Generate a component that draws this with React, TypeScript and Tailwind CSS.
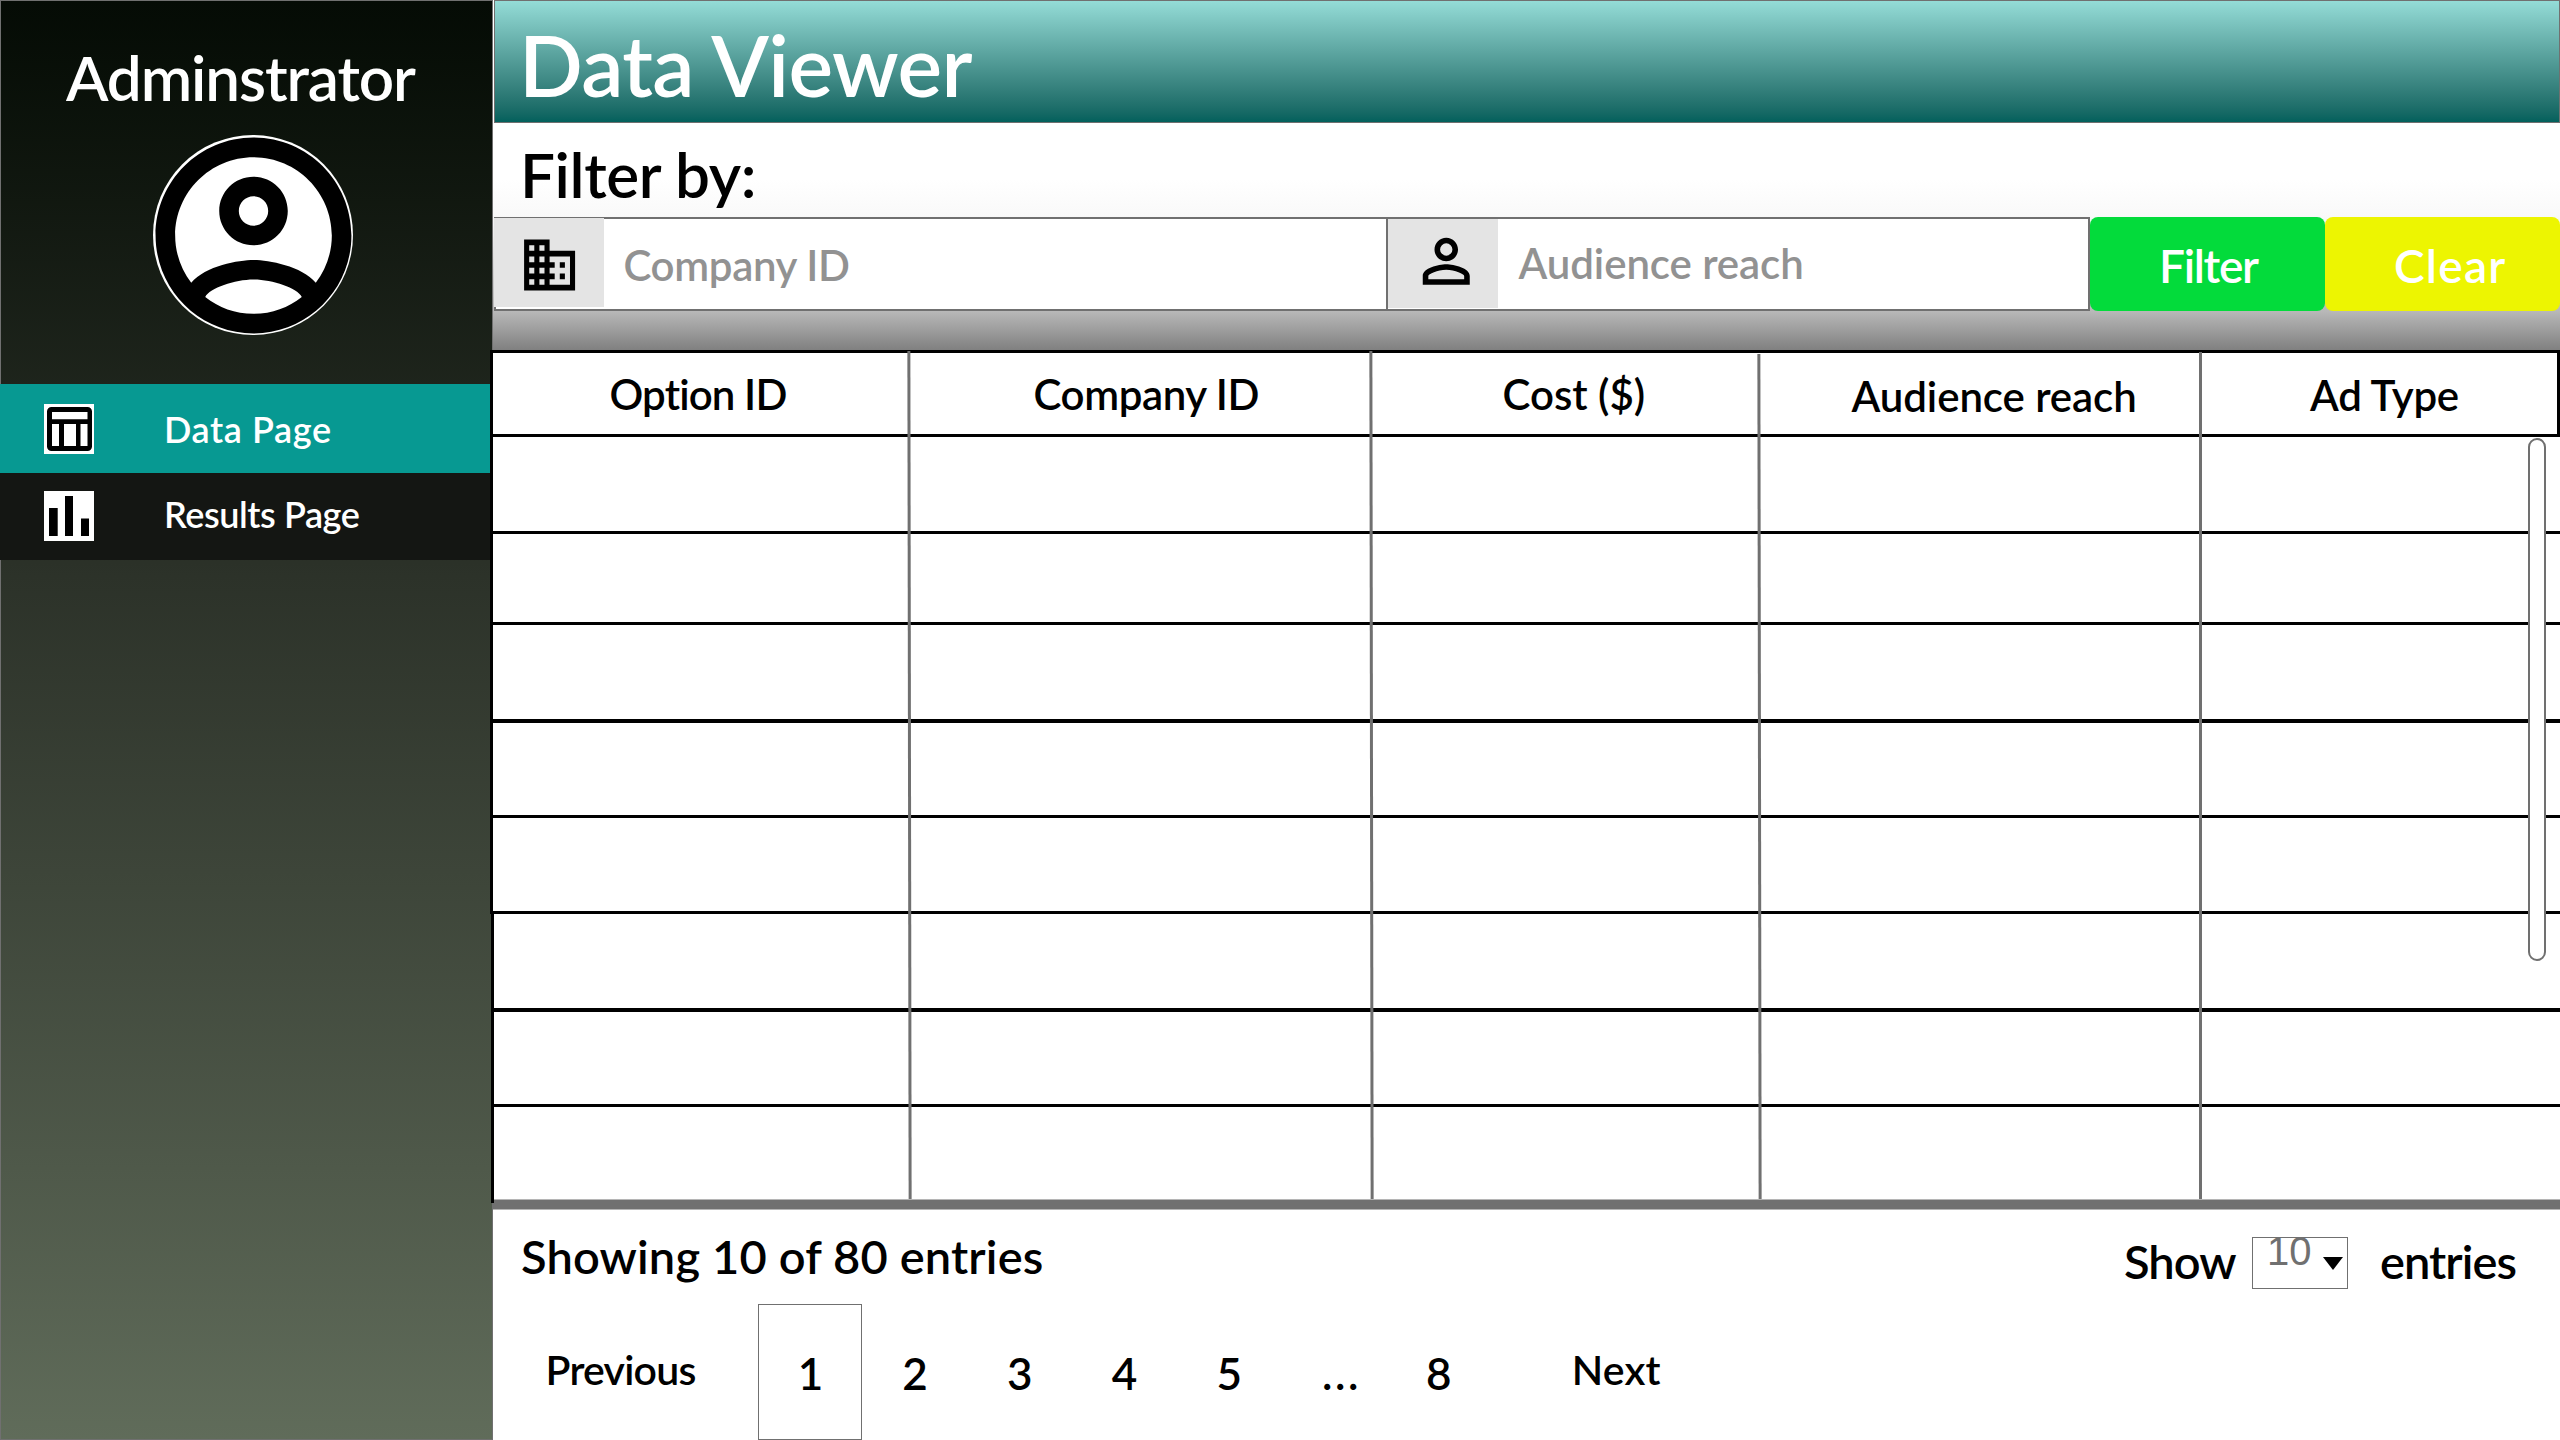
import React from "react";

const columns = [
  { label: "Option ID", cell: "pl-[116.5px] pt-[20px] tracking-[-0.85px]" },
  { label: "Company ID", cell: "pl-[123.5px] pt-[20px] tracking-[-0.4px]" },
  { label: "Cost ($)", cell: "pl-[130.5px] pt-[20px] tracking-[0px]" },
  { label: "Audience reach", cell: "pl-[91.5px] pt-[22px] tracking-[-0.08px]" },
  { label: "Ad Type", cell: "pl-[108px] pt-[21px] tracking-[-0.24px]" },
];

const rows = [
  "h-[97px] border-b-[3px]",
  "h-[91px] border-b-[3px]",
  "h-[98px] border-b-[4px]",
  "h-[95px] border-b-[3px]",
  "h-[96px] border-b-[3px]",
  "ml-px h-[98px] border-b-[4px]",
  "ml-px h-[95px] border-b-[3px]",
  "ml-px h-[92px]",
];

const rules = [
  "left-[418px] top-[1px] h-[848px] rotate-[-0.085deg]",
  "left-[880px] top-[1px] h-[848px] rotate-[-0.085deg]",
  "left-[1268px] top-[4px] h-[845px] rotate-[-0.085deg]",
  "left-[1709px] top-[2px] h-[847px]",
];

const pages = ["2", "3", "4", "5", "...", "8"];

function AvatarIcon() {
  return (
    <svg viewBox="0 0 24 24" className="size-[235px] shrink-0">
      <path
        fillRule="evenodd"
        d="M12 2C6.48 2 2 6.48 2 12s4.48 10 10 10 10-4.48 10-10S17.52 2 12 2zM7.07 18.28C7.5 17.38 10.12 16.5 12 16.5s4.51.88 4.93 1.78C15.57 19.36 13.86 20 12 20s-3.57-.64-4.93-1.72zm11.29-1.45C16.93 15.09 13.46 14.5 12 14.5s-4.93.59-6.36 2.33C4.62 15.49 4 13.82 4 12c0-4.41 3.59-8 8-8s8 3.59 8 8c0 1.82-.62 3.49-1.64 4.83zM12 6c-1.94 0-3.5 1.56-3.5 3.5S10.06 13 12 13s3.5-1.56 3.5-3.5S13.94 6 12 6zm0 5c-.83 0-1.5-.67-1.5-1.5S11.17 8 12 8s1.5.67 1.5 1.5S12.83 11 12 11z"
      />
    </svg>
  );
}

function TableIcon() {
  return (
    <svg viewBox="0 0 50 50" className="size-[50px] shrink-0 bg-white">
      <path
        fillRule="evenodd"
        d="M7.5 3h36a4.5 4.5 0 0 1 4.5 4.5v35a4.5 4.5 0 0 1-4.5 4.5h-36A4.5 4.5 0 0 1 3 42.5v-35A4.5 4.5 0 0 1 7.5 3zM8 8v7.3h35.5V8zM8 20v22h7V20zM20 20v22h12V20zM36.5 20v22h7V20z"
      />
    </svg>
  );
}

function BarsIcon() {
  return (
    <svg viewBox="0 0 50 50" className="size-[50px] shrink-0 bg-white">
      <path d="M5 17h8.7v28H5zM21 5h8v40h-8zM37 27.5h8V45h-8z" />
    </svg>
  );
}

function BuildingIcon() {
  return (
    <svg viewBox="0 0 24 24" preserveAspectRatio="none" className="ml-[25px] mt-[12.5px] h-[68px] w-[61.2px] shrink-0">
      <path d="M12 7V3H2v18h20V7H12zM6 19H4v-2h2v2zm0-4H4v-2h2v2zm0-4H4V9h2v2zm0-4H4V5h2v2zm4 12H8v-2h2v2zm0-4H8v-2h2v2zm0-4H8V9h2v2zm0-4H8V5h2v2zm10 12h-8v-2h2v-2h-2v-2h2v-2h-2V9h8v10zm-2-8h-2v2h2v-2zm0 4h-2v2h2v-2z" />
    </svg>
  );
}

function PersonIcon() {
  return (
    <svg viewBox="0 0 24 24" className="ml-[23px] mt-[7.3px] size-[70.5px] shrink-0">
      <path d="M12 5.9a2.1 2.1 0 1 1 0 4.2 2.1 2.1 0 0 1 0-4.2m0 9c2.97 0 6.1 1.46 6.1 2.1v1.1H5.9V17c0-.64 3.13-2.1 6.1-2.1M12 4C9.79 4 8 5.79 8 8s1.79 4 4 4 4-1.79 4-4-1.79-4-4-4zm0 9c-2.67 0-8 1.34-8 4v3h16v-3c0-2.66-5.33-4-8-4z" />
    </svg>
  );
}

function Sidebar() {
  return (
    <aside className="flex w-[493px] shrink-0 flex-col border border-[#707070] bg-linear-to-b from-[#050b05] via-[#2c3229] via-40% to-[#606c5a] text-white">
      <h2 className="ml-[65px] mt-[45px] text-[62px] leading-none tracking-[-1.1px]">Adminstrator</h2>
      <div className="ml-[152px] mt-[27px] flex size-[200px] items-center justify-center rounded-full bg-white">
        <AvatarIcon />
      </div>
      <nav className="-ml-px mt-[49px] w-[490px] text-[36px] leading-none">
        <a className="flex h-[89px] items-start bg-[#079992] pl-[44px] pt-[20px]">
          <TableIcon />
          <span className="ml-[70px] mt-[7px] tracking-[0.62px]">Data Page</span>
        </a>
        <a className="flex h-[87px] items-start bg-[#141613] pl-[44px] pt-[18px]">
          <BarsIcon />
          <span className="ml-[70px] mt-[5px] tracking-[-0.42px]">Results Page</span>
        </a>
      </nav>
    </aside>
  );
}

function Filters() {
  return (
    <section className="flex h-[227px] flex-col bg-[linear-gradient(to_bottom,#ffffff_25%,#f9f9f9_41%,#b8b8b8_83%,#808080_100%)]">
      <h2 className="h-[94px] pl-[27px] pt-[20px] text-[62px] leading-none tracking-[-0.39px]">Filter by:</h2>
      <div className="ml-px flex h-[94px]">
        <div className="flex w-[892px] items-start border-y-2 border-l-2 border-[#707070] bg-white">
          <div className="-ml-[2px] -mt-px flex h-[89px] w-[110px] shrink-0 items-start bg-[#e4e4e4]">
            <BuildingIcon />
          </div>
          <span className="ml-[19.5px] mt-[25px] text-[42px] leading-none tracking-[-0.35px] text-[#929292]">Company ID</span>
        </div>
        <div className="flex w-[704px] items-start border-2 border-[#707070] bg-white">
          <div className="flex h-[89px] w-[110px] shrink-0 items-start bg-[#e4e4e4]">
            <PersonIcon />
          </div>
          <span className="ml-[20.5px] mt-[23px] text-[42px] leading-none tracking-[-0.08px] text-[#929292]">Audience reach</span>
        </div>
        <button className="flex w-[235px] items-start rounded-lg bg-[#03db3b] pl-[69px] pt-[26px] text-[46px] leading-none tracking-[-1.3px] text-white">
          Filter
        </button>
        <button className="flex w-[235px] items-start rounded-lg bg-[#edf501] pl-[69px] pt-[26px] text-[46px] leading-none tracking-[1.25px] text-white">
          Clear
        </button>
      </div>
    </section>
  );
}

function DataTable() {
  return (
    <section className="relative -ml-[3px] h-[849px]">
      <div className="grid h-[87px] grid-cols-[417px_462px_388px_442px_1fr] border-[3px] border-black bg-white text-[42px] leading-none">
        {columns.map((c) => (
          <div key={c.label} className={c.cell}>
            {c.label}
          </div>
        ))}
      </div>
      {rows.map((r, i) => (
        <div key={i} className={`border-l-[3px] border-black bg-white ${r}`} />
      ))}
      {rules.map((r) => (
        <div key={r} className={`absolute w-[3px] bg-[#707070] ${r}`} />
      ))}
      <div className="absolute -bottom-[4px] left-px h-[4px] w-[3px] bg-black" />
      <div className="absolute left-[2038px] top-[88px] h-[523px] w-[18px] rounded-full border-2 border-[#707070] bg-white" />
    </section>
  );
}

function Footer() {
  return (
    <footer className="h-[230px] bg-white">
      <div className="flex h-[94px] items-start justify-between text-[47px] leading-none">
        <p className="ml-[28px] mt-[23px] tracking-[0.16px]">Showing 10 of 80 entries</p>
        <div className="flex w-[435px] items-start pt-[27px]">
          <span className="-ml-px mt-px w-[128px] tracking-[-0.95px]">Show</span>
          <div className="flex h-[52px] w-[96px] items-start border border-[#707070]">
            <span className="-mt-[7px] ml-[14px] font-['Liberation_Sans',sans-serif] text-[40px] font-normal text-[#707070]">10</span>
            <svg viewBox="0 0 20 13" className="ml-[11px] mt-[19px] h-[13px] w-[20px] shrink-0">
              <path d="M0 0h20L10 13z" />
            </svg>
          </div>
          <span className="ml-[32px] mt-px tracking-[-0.95px]">entries</span>
        </div>
      </div>
      <div className="flex h-[136px] items-start text-[44px] leading-none">
        <span className="w-[265px] pl-[52.5px] pt-[45px] text-[41px] tracking-[-0.78px]">Previous</span>
        <span className="h-[136px] w-[104px] border border-[#707070] pl-px pt-[46px] text-center">1</span>
        {pages.map((p) => (
          <span key={p} className={`w-[104.8px] pt-[47px] text-center ${p === "..." ? "pl-[16px] tracking-[2.6px]" : "pl-px"}`}>
            {p}
          </span>
        ))}
        <span className="ml-[81px] pt-[45px] text-[41px] tracking-[0.19px]">Next</span>
      </div>
    </footer>
  );
}

export default function App() {
  return (
    <div className="flex h-[1440px] w-[2560px] overflow-hidden bg-white font-['Lato',sans-serif] font-semibold text-black">
      <Sidebar />
      <main className="flex w-[2067px] flex-col">
        <header className="ml-px h-[123px] border border-[#707070] bg-linear-to-b from-[#94dcd7] to-[#02605c] pl-[24px] pt-[21.5px] text-[84px] leading-none tracking-[-0.6px] text-white">
          Data Viewer
        </header>
        <Filters />
        <DataTable />
        <div className="h-[11px] border-y border-[#b5b5b5] bg-[#707070]" />
        <Footer />
      </main>
    </div>
  );
}
